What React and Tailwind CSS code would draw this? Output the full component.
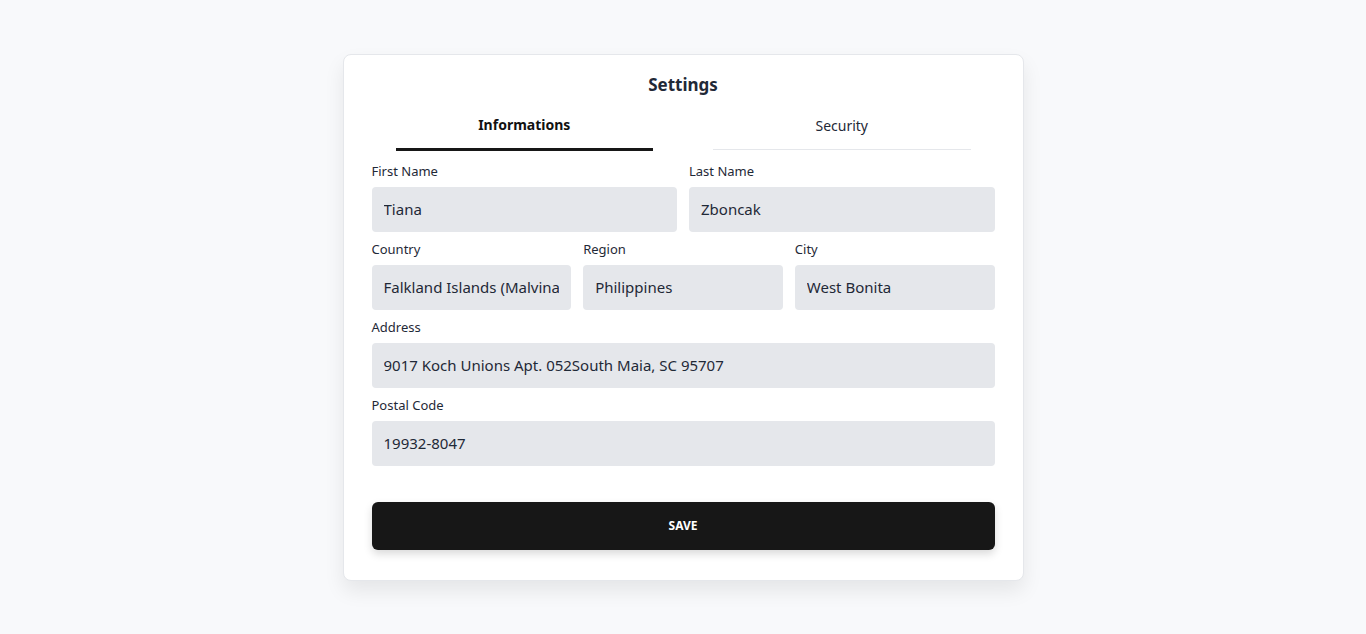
import React from "react";

function Field({ label, value, className = "" }) {
  return (
    <div className={"flex flex-col " + className}>
      <label className="text-[13px] leading-4 text-[#1f2937] mb-2">{label}</label>
      <input
        readOnly
        value={value}
        className="h-[45px] w-full rounded-[4px] bg-[#e5e7eb] px-3 text-[15px] text-[#1f2937] outline-none"
      />
    </div>
  );
}

export default function App() {
  return (
    <div
      className="min-h-screen w-full bg-[#f8f9fb] flex items-center justify-center"
      style={{ fontFamily: '"Noto Sans", "Open Sans", sans-serif' }}
    >
      <div className="w-[681px] rounded-lg border border-gray-200 bg-white px-7 pt-4 pb-[30px] shadow-[0_10px_20px_rgba(0,0,0,0.08)]">
        <h1 className="text-center text-[17px] leading-7 font-bold text-[#1f2937]">Settings</h1>
        <div className="mt-[14px] flex px-6 gap-[60px]">
          <button className="flex-1 border-b-[3px] border-[#171717] pb-[11px] text-sm leading-6 font-bold text-[#111]">
            Informations
          </button>
          <div className="flex-1 self-start">
            <button className="w-full border-b border-gray-200 pb-[11px] text-sm leading-6 text-[#1f2937]">
              Security
            </button>
          </div>
        </div>
        <div className="mt-3 flex flex-col gap-[9px]">
          <div className="grid grid-cols-2 gap-3">
            <Field label="First Name" value="Tiana" />
            <Field label="Last Name" value="Zboncak" />
          </div>
          <div className="grid grid-cols-3 gap-3">
            <Field label="Country" value="Falkland Islands (Malvinas)" />
            <Field label="Region" value="Philippines" />
            <Field label="City" value="West Bonita" />
          </div>
          <Field label="Address" value="9017 Koch Unions Apt. 052South Maia, SC 95707" />
          <Field label="Postal Code" value="19932-8047" />
        </div>
        <button className="mt-9 h-12 w-full rounded-md bg-[#171717] text-xs font-bold text-white shadow-[0_4px_8px_rgba(0,0,0,0.15)]">
          SAVE
        </button>
      </div>
    </div>
  );
}
